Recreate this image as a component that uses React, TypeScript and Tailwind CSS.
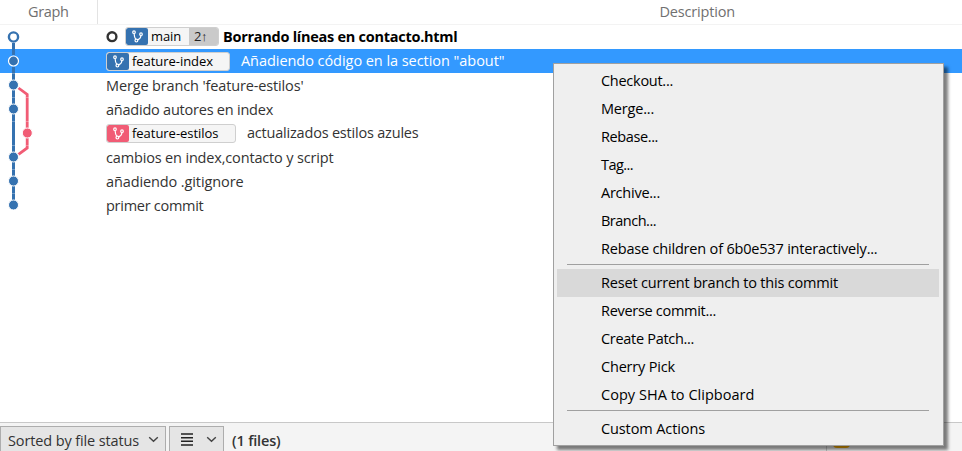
import { useLayoutEffect, useRef, useState } from "react";

type LabelProps = { text: string; width: number; className?: string };

/* Text run whose letter spacing is adjusted so that it takes the given width. */
function Label({ text, width, className = "" }: LabelProps) {
  const ref = useRef<HTMLSpanElement>(null);
  const [spacing, setSpacing] = useState(0);
  useLayoutEffect(() => {
    if (!ref.current) return;
    const natural = ref.current.getBoundingClientRect().width;
    setSpacing((s) => s + (width - natural) / text.length);
  }, [text, width]);
  return (
    <span ref={ref} className={`inline-block shrink-0 whitespace-pre ${className}`} style={{ letterSpacing: spacing }}>
      {text}
    </span>
  );
}

function BranchIcon() {
  return (
    <svg width="11" height="13" viewBox="0 0 11 13" fill="none" stroke="white" strokeWidth="1.2">
      <circle cx="2" cy="2.2" r="1.3" />
      <circle cx="4.4" cy="10.6" r="1.4" />
      <circle cx="9" cy="4.2" r="1.3" />
      <path d="M2.1 3.5C2.2 6 2.7 7.8 3.8 9.3M9 5.5C8.8 8 7.4 9.2 5.7 9.9" />
    </svg>
  );
}

type BadgeProps = { name: string; nameWidth: number; box: string; color: string; ahead?: string };

function Badge({ name, nameWidth, box, color, ahead }: BadgeProps) {
  return (
    <span className={`flex h-[19px] shrink-0 overflow-hidden rounded-[3px] border border-[#cfcfcf] bg-[#f5f5f5] ${box}`}>
      <span className={`flex w-[22px] shrink-0 items-center justify-center rounded-[2px] pl-px ${color}`}>
        <BranchIcon />
      </span>
      <span className="flex flex-1 items-center pl-[3px] text-[13px] leading-[17px] text-black">
        <Label text={name} width={nameWidth} />
      </span>
      {ahead && (
        <span className="flex w-[29px] items-center bg-[#cacaca] pl-[5px] text-[13px] leading-[17px] text-[#222]">
          <Label text={ahead} width={13} />
        </span>
      )}
    </span>
  );
}

function Graph() {
  const blue = "#3572b0";
  const pink = "#f15c75";
  const rows = [85, 109, 157, 181, 205];
  return (
    <svg className="block" width="97" height="192" viewBox="0 25 97 192" fill="none">
      <path d="M13.5 43V55M13.5 67V205" stroke={blue} strokeWidth="3" />
      <path d="M12 73.5h3M12 97.5h3M12 121.5h3M12 145.5h3M12 169.5h3M12 193.5h3" stroke="#fff" strokeOpacity=".3" />
      <path d="M18.5 88L27.2 94.5V148L18.5 154.3" stroke={pink} strokeWidth="2.8" />
      <path d="M26 97.5h3M26 121.5h3M26 145.5h3" stroke="#fff" strokeOpacity=".3" />
      <circle cx="13.5" cy="37" r="4.6" fill="#fff" stroke={blue} strokeWidth="2.4" />
      <circle cx="13.5" cy="61" r="5" fill={blue} stroke="#fff" strokeWidth="1.2" />
      {rows.map((y) => (
        <circle key={y} cx="13.5" cy={y} r="5" fill={blue} stroke="#fff" strokeWidth="1" />
      ))}
      <circle cx="27.3" cy="133" r="5" fill={pink} stroke="#fff" strokeWidth="1" />
    </svg>
  );
}

function Chevron() {
  return (
    <svg width="11" height="7" viewBox="0 0 11 7" fill="none" stroke="#444" strokeWidth="1.4">
      <path d="M1.2 1.2L5.5 5.3L9.8 1.2" />
    </svg>
  );
}

function MenuItem({ text, width, active = false }: { text: string; width: number; active?: boolean }) {
  return (
    <div className={`mr-[4px] ml-[3px] flex h-7 items-center pl-[44px] text-[14.5px] leading-7 text-black ${active ? "bg-[#d9d9d9]" : ""}`}>
      <Label text={text} width={width} />
    </div>
  );
}

function Separator() {
  return (
    <div className="mr-[14px] ml-[13px] flex h-[6px] items-start pt-px">
      <div className="h-px w-full bg-[#a0a0a0]" />
    </div>
  );
}

function ContextMenu() {
  return (
    <div className="absolute top-[63px] left-[553px] h-[383px] w-[391px] border border-[#a0a0a0] bg-[#efefef] pt-[3px] shadow-[4px_4px_3px_rgba(0,0,0,0.5)]">
      <MenuItem text="Checkout..." width={72} />
      <MenuItem text="Merge..." width={53} />
      <MenuItem text="Rebase..." width={57} />
      <MenuItem text="Tag..." width={32} />
      <MenuItem text="Archive..." width={59} />
      <MenuItem text="Branch..." width={55} />
      <MenuItem text="Rebase children of 6b0e537 interactively..." width={276.5} />
      <Separator />
      <MenuItem text="Reset current branch to this commit" width={237} active />
      <MenuItem text="Reverse commit..." width={115} />
      <MenuItem text="Create Patch..." width={93} />
      <MenuItem text="Cherry Pick" width={74} />
      <MenuItem text="Copy SHA to Clipboard" width={153.5} />
      <Separator />
      <MenuItem text="Custom Actions" width={104} />
    </div>
  );
}

const row = "flex h-6 items-center pl-[9px] leading-6";

export default function App() {
  return (
    <div className="relative flex h-[451px] w-[962px] flex-col overflow-hidden bg-white font-['Open_Sans',sans-serif] text-[14.5px] text-[#333]">
      <header className="flex h-[25px] shrink-0 border-b border-[#f3f3f3] leading-[24px] text-[#707070]">
        <div className="w-[98px] border-r border-[#e3e3e3] pl-[28px]">
          <Label text="Graph" width={40.5} />
        </div>
        <div className="flex-1 pl-[561.5px]">
          <Label text="Description" width={75.5} />
        </div>
      </header>

      <main className="flex min-h-0 flex-1 bg-[linear-gradient(to_bottom,transparent_24px,#3399ff_24px,#3399ff_48px,transparent_48px)]">
        <div className="w-[97px] shrink-0">
          <Graph />
        </div>
        <div className="flex-1">
          <div className={`${row} font-bold text-black`}>
            <svg className="shrink-0" width="12" height="12" viewBox="0 0 12 12">
              <circle cx="6" cy="5.7" r="4.4" fill="#fff" stroke="#333" strokeWidth="2.4" />
            </svg>
            <span className="mb-px ml-[7px] font-normal">
              <Badge name="main" nameWidth={30} box="w-[94px]" color="bg-[#3572b0]" ahead="2↑" />
            </span>
            <Label className="ml-[4px]" text="Borrando líneas en contacto.html" width={234.5} />
          </div>
          <div className={`${row} text-white`}>
            <Badge name="feature-index" nameWidth={81} box="w-[124px]" color="bg-[#3572b0]" />
            <Label className="ml-[11px]" text={'Añadiendo código en la section "about"'} width={263.5} />
          </div>
          <div className={`${row} pt-[2px]`}>
            <Label text="Merge branch 'feature-estilos'" width={197.5} />
          </div>
          <div className={`${row} pt-[2px]`}>
            <Label text="añadido autores en index" width={167} />
          </div>
          <div className={row}>
            <Badge name="feature-estilos" nameWidth={86.5} box="w-[130px]" color="bg-[#f15c75]" />
            <Label className="ml-[11px]" text="actualizados estilos azules" width={171.5} />
          </div>
          <div className={`${row} pt-[2px]`}>
            <Label text="cambios en index,contacto y script" width={227.5} />
          </div>
          <div className={`${row} pt-[2px]`}>
            <Label text="añadiendo .gitignore" width={137.5} />
          </div>
          <div className={`${row} pt-[2px]`}>
            <Label text="primer commit" width={97.5} />
          </div>
        </div>
      </main>

      <footer className="flex h-[29px] shrink-0 border-t border-[#c8c8c8] bg-[#f4f4f4] pt-[3px]">
        <button className="flex h-7 w-[166px] shrink-0 items-center border border-[#adadad] bg-[#e5e5e5] pt-px pl-[7px]">
          <Label text="Sorted by file status" width={131} />
          <span className="mb-[2px] ml-[9px]">
            <Chevron />
          </span>
        </button>
        <button className="ml-[3px] flex h-7 w-[55px] shrink-0 items-center border border-[#adadad] bg-[#e5e5e5] pl-[11px]">
          <svg className="mb-[2px]" width="12" height="13" viewBox="0 0 12 13" stroke="#222" strokeWidth="1.5">
            <path d="M0 1h12M0 4.7h12M0 8.3h12M0 12h12" />
          </svg>
          <span className="mb-px ml-[13px]">
            <Chevron />
          </span>
        </button>
        <div className="w-[602px] shrink-0 pt-px pl-[8px] leading-7 font-semibold">
          <Label text="(1 files)" width={48.5} />
        </div>
        <div className="flex flex-1 border-l border-[#c8c8c8] pl-[6px]">
          <div className="mt-[6px] h-4 w-[17px] rounded-[4px] bg-[#ffb000]" />
        </div>
      </footer>

      <ContextMenu />
    </div>
  );
}
